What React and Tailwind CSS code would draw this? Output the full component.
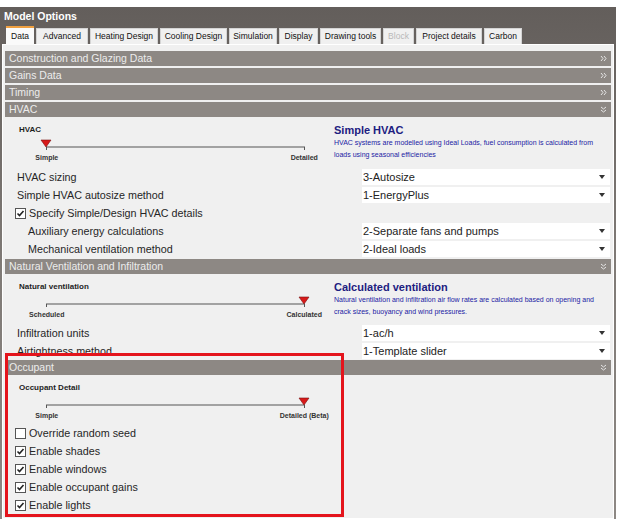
import React from 'react';

const tabs = [
  { name: 'Data', w: 'w-[28px]' },
  { name: 'Advanced', w: 'w-[52px]' },
  { name: 'Heating Design', w: 'w-[68px]' },
  { name: 'Cooling Design', w: 'w-[67px]' },
  { name: 'Simulation', w: 'w-[48px]' },
  { name: 'Display', w: 'w-[39px]' },
  { name: 'Drawing tools', w: 'w-[61px]' },
  { name: 'Block', w: 'w-[31px]', disabled: true },
  { name: 'Project details', w: 'w-[66px]' },
  { name: 'Carbon', w: 'w-[38px]' },
];

function Chevron({ open }) {
  return (
    <svg width="7" height="7" viewBox="0 0 7 7" className="mr-[4px]">
      {open ? (
        <g fill="none" stroke="#e6e6e6" strokeWidth="1">
          <path d="M1 1 L3.5 3 L6 1" />
          <path d="M1 4 L3.5 6 L6 4" />
        </g>
      ) : (
        <g fill="none" stroke="#e6e6e6" strokeWidth="1">
          <path d="M1 1 L3 3.5 L1 6" />
          <path d="M4 1 L6 3.5 L4 6" />
        </g>
      )}
    </svg>
  );
}

function Header({ title, open }) {
  return (
    <div className="flex h-[15px] items-center justify-between bg-[#8d8884] pl-[4px] text-[10.5px] leading-none text-[#ececec]">
      <span>{title}</span>
      <Chevron open={open} />
    </div>
  );
}

function Slider({ label, left, right, pos }) {
  const cx = pos === 'left' ? 15 : 273;
  return (
    <div className="w-[329px] pt-[8px]">
      <div className="pl-[14px] text-[8px] font-bold leading-[10px] text-[#1e1e1e]">{label}</div>
      <svg width="292" height="13" className="ml-[26px] mt-[2px] block">
        <line x1="15" y1="10" x2="274" y2="10" stroke="#555" strokeWidth="1" />
        <line x1="15.5" y1="10" x2="15.5" y2="13" stroke="#555" strokeWidth="1" />
        <line x1="273.5" y1="10" x2="273.5" y2="13" stroke="#555" strokeWidth="1" />
        <path d={`M${cx - 5} 3 L${cx + 5} 3 L${cx} 10 Z`} fill="#d81a1a" stroke="#7a1010" strokeWidth="0.6" />
      </svg>
      <div className="mt-[3px] flex text-[7px] font-bold leading-[9px] text-[#333]">
        <span className="ml-[17px] w-[50px] text-center">{left}</span>
        <span className="ml-[203px] w-[60px] text-center">{right}</span>
      </div>
    </div>
  );
}

function Info({ title, children }) {
  return (
    <div className="w-[278px] pt-[6px]">
      <div className="text-[11px] font-bold leading-[14px] text-[#1d2080]">{title}</div>
      <p className="text-[7px] leading-[11.5px] text-[#2222a4]">{children}</p>
    </div>
  );
}

function Select({ value }) {
  return (
    <div className="flex h-[16px] w-[248px] items-center justify-between bg-white pl-[1px] text-[11px] text-[#222]">
      <span>{value}</span>
      <svg width="6" height="4" viewBox="0 0 6 4" className="mr-[5px]">
        <path d="M0 0 L6 0 L3 4 Z" fill="#333" />
      </svg>
    </div>
  );
}

function Check({ checked }) {
  return (
    <span className="flex h-[11px] w-[11px] items-center justify-center border border-[#555] bg-white">
      {checked && (
        <svg width="9" height="9" viewBox="0 0 9 9">
          <path d="M1.5 4.5 L3.5 6.5 L7.5 2" fill="none" stroke="#222" strokeWidth="1.6" />
        </svg>
      )}
    </span>
  );
}

function Row({ label, indent, value, check }) {
  return (
    <div className="flex h-[16px] items-center">
      <div className={`flex w-[357px] items-center text-[10.75px] text-[#262626] ${indent ? 'pl-[23px]' : check !== undefined ? 'pl-[10px]' : 'pl-[12px]'}`}>
        {check !== undefined && <Check checked={check} />}
        <span className={check !== undefined ? 'ml-[3px]' : ''}>{label}</span>
      </div>
      {value && <Select value={value} />}
    </div>
  );
}

export default function App() {
  return (
    <div className="relative h-[519px] w-[618px] overflow-hidden bg-white font-['Liberation_Sans',Arial,sans-serif]">
      <div className="h-[7px]" />
      <div className="h-[512px] w-[616px] bg-linear-to-b from-[#635e5b] via-[#7f7a76] to-[#8d8884]">
        <div className="flex h-[19px] items-center pl-[4px] text-[10.5px] font-bold text-white">Model Options</div>
        <div className="flex h-[18px] items-end gap-[2px] pl-[6px]">
          {tabs.map(t =>
            t.name === 'Data' ? (
              <div key={t.name} className={`${t.w} relative z-10 -mb-[1px] flex h-[19px] items-center justify-center border-t-2 border-[#f0a040] bg-[#fafafa] text-[8.5px] text-[#111]`}>
                {t.name}
              </div>
            ) : (
              <div key={t.name} className={`${t.w} flex h-[16px] items-center justify-center border border-b-0 border-[#d4d4d4] bg-[#f0f0f0] text-[8.5px] ${t.disabled ? 'text-[#b8b8b8]' : 'text-[#111]'}`}>
                {t.name}
              </div>
            )
          )}
        </div>
        <div className="ml-[2px] h-[475px] w-[612px] border border-white bg-[#f0f0f0] px-[2px] pt-[6px]">
          <div className="flex flex-col gap-[2px]">
            <Header title="Construction and Glazing Data" />
            <Header title="Gains Data" />
            <Header title="Timing" />
            <Header title="HVAC" open />
          </div>

          <div className="h-[142px]">
            <div className="flex h-[52px]">
              <Slider label="HVAC" left="Simple" right="Detailed" pos="left" />
              <Info title="Simple HVAC">
                HVAC systems are modelled using Ideal Loads, fuel consumption is calculated from loads using seasonal efficiencies
              </Info>
            </div>
            <div className="flex flex-col gap-[2px]">
              <Row label="HVAC sizing" value="3-Autosize" />
              <Row label="Simple HVAC autosize method" value="1-EnergyPlus" />
              <Row label="Specify Simple/Design HVAC details" check={true} />
              <Row label="Auxiliary energy calculations" indent value="2-Separate fans and pumps" />
              <Row label="Mechanical ventilation method" indent value="2-Ideal loads" />
            </div>
          </div>

          <Header title="Natural Ventilation and Infiltration" open />
          <div className="h-[86px] overflow-hidden">
            <div className="flex h-[51px]">
              <Slider label="Natural ventilation" left="Scheduled" right="Calculated" pos="right" />
              <Info title="Calculated ventilation">
                Natural ventilation and infiltration air flow rates are calculated based on opening and crack sizes, buoyancy and wind pressures.
              </Info>
            </div>
            <div className="flex flex-col gap-[2px]">
              <Row label="Infiltration units" value="1-ac/h" />
              <Row label="Airtightness method" value="1-Template slider" />
            </div>
          </div>

          <Header title="Occupant" open />
          <div className="h-[50px]">
            <Slider label="Occupant Detail" left="Simple" right="Detailed (Beta)" pos="right" />
          </div>
          <div className="flex flex-col gap-[2px]">
            <Row label="Override random seed" check={false} />
            <Row label="Enable shades" check={true} />
            <Row label="Enable windows" check={true} />
            <Row label="Enable occupant gains" check={true} />
            <Row label="Enable lights" check={true} />
          </div>
        </div>
      </div>
      <div className="absolute left-[5px] top-[353px] h-[164px] w-[339px] border-[3px] border-[#e4141c]" />
    </div>
  );
}
